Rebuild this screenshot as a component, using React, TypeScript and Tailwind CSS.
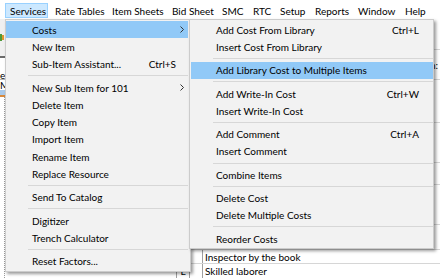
import React from 'react';

type Entry = { label?: string; shortcut?: string; arrow?: boolean; active?: boolean; sep?: boolean };

const menuBar = [
  { label: 'Services', w: 'w-[43px]', open: true },
  { label: 'Rate Tables', w: 'w-[57px]' },
  { label: 'Item Sheets', w: 'w-[60px]' },
  { label: 'Bid Sheet', w: 'w-[50px]' },
  { label: 'SMC', w: 'w-[31px]' },
  { label: 'RTC', w: 'w-[27px]' },
  { label: 'Setup', w: 'w-[35px]' },
  { label: 'Reports', w: 'w-[43px]' },
  { label: 'Window', w: 'w-[47px]' },
  { label: 'Help', w: 'w-[32px]' },
];

const servicesMenu: Entry[] = [
  { label: 'Costs', arrow: true, active: true },
  { label: 'New Item' },
  { label: 'Sub-Item Assistant...', shortcut: 'Ctrl+S' },
  { sep: true },
  { label: 'New Sub Item for 101', arrow: true },
  { label: 'Delete Item' },
  { label: 'Copy Item' },
  { label: 'Import Item' },
  { label: 'Rename Item' },
  { label: 'Replace Resource' },
  { sep: true },
  { label: 'Send To Catalog' },
  { sep: true },
  { label: 'Digitizer' },
  { label: 'Trench Calculator' },
  { sep: true },
  { label: 'Reset Factors...' },
];

const costsMenu: Entry[] = [
  { label: 'Add Cost From Library', shortcut: 'Ctrl+L' },
  { label: 'Insert Cost From Library' },
  { sep: true },
  { label: 'Add Library Cost to Multiple Items', active: true },
  { sep: true },
  { label: 'Add Write-In Cost', shortcut: 'Ctrl+W' },
  { label: 'Insert Write-In Cost' },
  { sep: true },
  { label: 'Add Comment', shortcut: 'Ctrl+A' },
  { label: 'Insert Comment' },
  { sep: true },
  { label: 'Combine Items' },
  { sep: true },
  { label: 'Delete Cost' },
  { label: 'Delete Multiple Costs' },
  { sep: true },
  { label: 'Reorder Costs' },
];

// right pane rows, heights picked off the screenshot
const formRows = ['h-[31px]', 'h-[30px]', 'h-[43px]', 'h-[40px]', 'h-[22px]', 'h-[40px]', 'h-[25px]'];

const Chevron = () => (
  <svg width="4" height="7" viewBox="0 0 4 7" fill="none">
    <path d="M0.5 0.5L3.5 3.5L0.5 6.5" stroke="#333" strokeWidth="1" />
  </svg>
);

const MainRow = ({ e }: { e: Entry }) =>
  e.sep ? (
    <div className="h-[6px] flex items-center pl-[22px] pr-[2px]">
      <div className="h-px flex-1 bg-[#d7d7d7]" />
    </div>
  ) : (
    <div className={`h-[17.3px] mr-[2px] flex items-center pl-[26px] pr-[4px] ${e.active ? 'bg-[#91c9f7]' : ''}`}>
      <span className="flex-1 whitespace-nowrap">{e.label}</span>
      {e.shortcut && <span className="whitespace-nowrap">{e.shortcut}</span>}
      <span className="w-[8px] flex justify-end">{e.arrow && <Chevron />}</span>
    </div>
  );

const SubRow = ({ e }: { e: Entry }) =>
  e.sep ? (
    <div className="h-[6px] flex items-center pl-[23px]">
      <div className="h-px flex-1 bg-[#d7d7d7]" />
    </div>
  ) : (
    <div className={`h-[17.3px] ml-[1px] flex items-center pl-[25px] pr-[14px] ${e.active ? 'bg-[#91c9f7]' : ''}`}>
      <span className="flex-1 whitespace-nowrap">{e.label}</span>
      {e.shortcut && <span className="whitespace-nowrap">{e.shortcut}</span>}
    </div>
  );

export default function App() {
  return (
    <div className="relative w-[440px] h-[278px] overflow-hidden bg-white font-['Lato',sans-serif] text-[10px] leading-none text-black">
      {/* menu bar */}
      <div className="h-[19px] flex items-start pt-[3px] pl-[5px] bg-white">
        {menuBar.map(m => (
          <div
            key={m.label}
            className={`${m.w} h-[15px] flex items-center whitespace-nowrap ${m.open ? 'pl-[4px] border border-[#99d1ff] bg-[#cce8ff]' : 'pl-[7px]'}`}
          >
            {m.label}
          </div>
        ))}
      </div>

      <div className="flex h-[259px]">
        {/* tree side, mostly hidden under the menu */}
        <div className="w-[172px] flex flex-col">
          <div className="h-[37px] bg-[#f0f0f0] flex items-center">
            <div className="w-[2px] h-[7px] bg-[#4f9a3a]" />
            <div className="w-[2px] h-[5px] bg-[#e0962e]" />
          </div>
          <div className="h-[2px] bg-[#6b6b6b]" />
          <div className="flex-1 flex flex-col bg-white">
            <div className="h-[12px]" />
            <div className="h-[10px] flex items-center border-b border-[#b5b5b5]">e</div>
            <div className="h-[10px] flex items-center">M,</div>
            <div className="w-[5px] h-[5px] bg-[#a9c9ea]" />
            <div className="w-[5px] h-[2px] bg-[#d9893a]" />
            <div className="flex-1 w-[5px] border-r border-dotted border-[#9a9a9a]" />
          </div>
        </div>

        {/* form / grid side */}
        <div className="flex-1 flex flex-col bg-white">
          {formRows.map((h, i) => (
            <div key={i} className={`${h} border-b border-[#d6d6d6] flex items-center justify-end pr-[2px]`}>
              {i === 1 && <span>Description:</span>}
            </div>
          ))}
          <div className="h-[14px] flex border-b border-[#d6d6d6]">
            <div className="w-[5px] border-r border-[#a0a0a0]" />
            <div className="w-[13px] border-r border-[#a0a0a0]" />
            <div className="w-[13px] border-r border-[#a0a0a0]" />
            <div className="flex-1 flex items-center pl-[2px]">Inspector by the book</div>
          </div>
          <div className="h-[14px] flex">
            <div className="w-[5px] border-r border-[#a0a0a0]" />
            <div className="w-[13px] border-r border-[#a0a0a0] flex items-center justify-center">L</div>
            <div className="w-[13px] border-r border-[#a0a0a0]" />
            <div className="flex-1 flex items-center pl-[2px]">Skilled laborer</div>
          </div>
        </div>
      </div>

      {/* Services dropdown */}
      <div className="absolute left-[5px] top-[19px] w-[186px] py-[1px] border border-[#cccccc] bg-[#f2f2f2] shadow-[2px_2px_3px_rgba(0,0,0,0.4)]">
        {servicesMenu.map((e, i) => (
          <MainRow key={i} e={e} />
        ))}
      </div>

      {/* Costs submenu */}
      <div className="absolute left-[189px] top-[19px] w-[245px] py-[1px] border border-[#cccccc] bg-[#f2f2f2] shadow-[2px_2px_3px_rgba(0,0,0,0.4)]">
        {costsMenu.map((e, i) => (
          <SubRow key={i} e={e} />
        ))}
      </div>
    </div>
  );
}
